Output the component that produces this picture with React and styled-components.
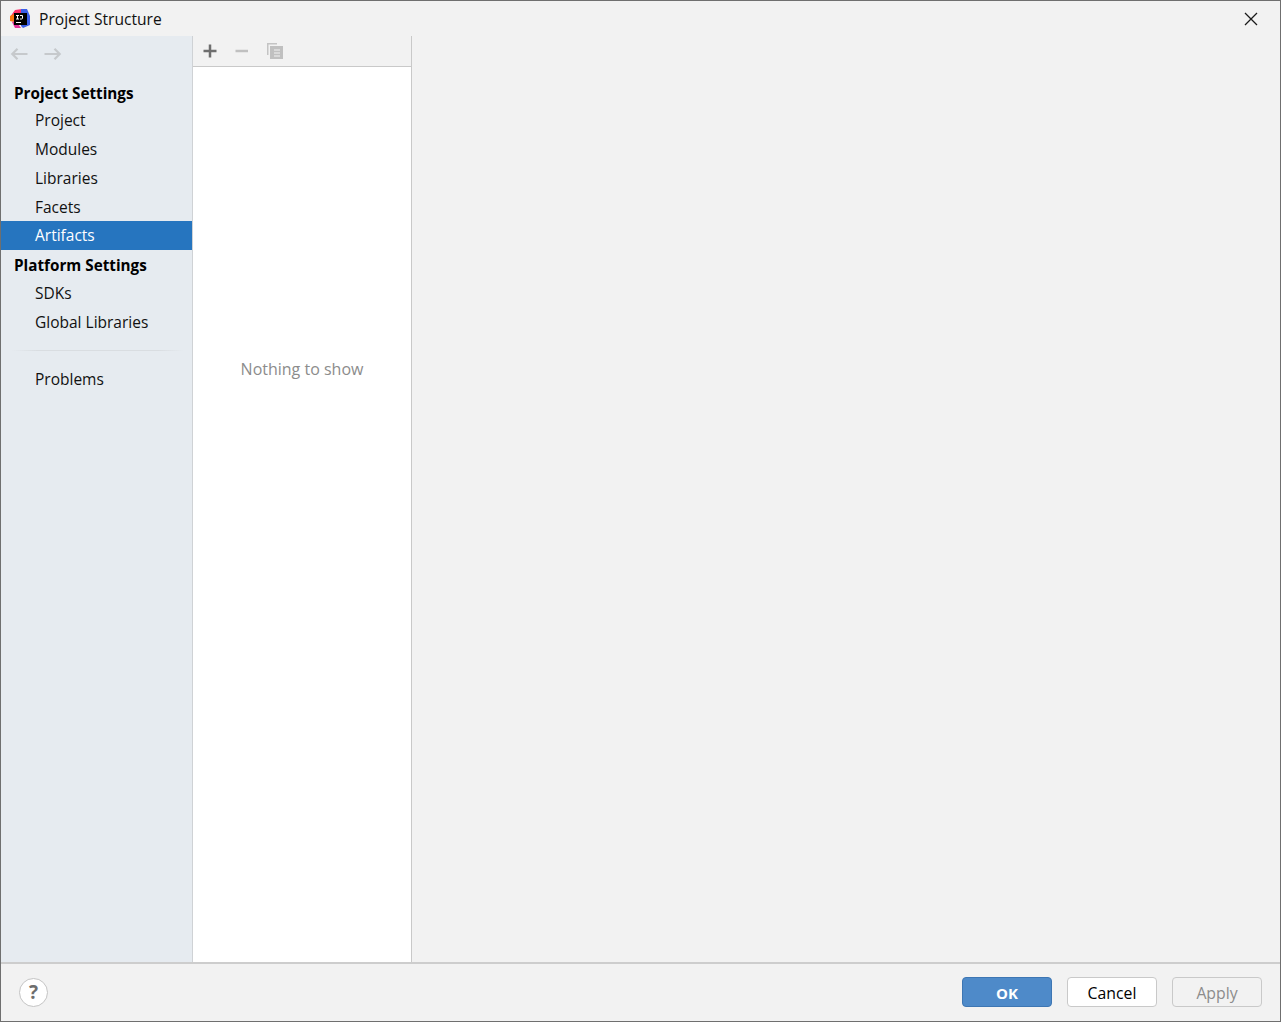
import React from 'react';
import styled, { createGlobalStyle } from 'styled-components';

const Global = createGlobalStyle`
  html, body { margin: 0; padding: 0; background: #f2f2f2; }
  #root { width: 1281px; height: 1022px; }
`;

const Window = styled.div`
  box-sizing: border-box;
  width: 1281px;
  height: 1022px;
  display: flex;
  flex-direction: column;
  background: #f2f2f2;
  border: 1px solid #6f6f6f;
  font-family: "Open Sans", "Noto Sans", sans-serif;
  font-size: 15px;
  color: #000;
  overflow: hidden;
`;

const TitleBar = styled.header`
  height: 35px;
  flex: none;
  display: flex;
  align-items: center;
  padding: 1px 20px 0 9px;
  box-sizing: border-box;
  gap: 9px;
`;

const Title = styled.span`
  flex: 1;
  font-size: 15.6px;
  color: #111;
`;

const CloseButton = styled.button`
  width: 20px;
  height: 20px;
  padding: 0;
  border: 0;
  background: none;
  display: flex;
  align-items: center;
  justify-content: center;
  position: relative;
  left: 1px;
`;

const Body = styled.div`
  flex: 1;
  min-height: 0;
  display: flex;
`;

const Sidebar = styled.nav`
  width: 192px;
  flex: none;
  box-sizing: border-box;
  background: #e6ebf0;
  border-right: 1px solid #cfd2d5;
  display: flex;
  flex-direction: column;
`;

const HistoryBar = styled.div`
  height: 35px;
  flex: none;
  box-sizing: border-box;
  display: flex;
  align-items: center;
  gap: 12px;
  padding: 1px 0 0 9px;
`;

const Heading = styled.div`
  box-sizing: border-box;
  height: ${p => p.$h}px;
  padding-top: ${p => p.$pt}px;
  line-height: ${p => p.$h - p.$pt}px;
  padding-left: 13px;
  font-weight: 700;
  font-size: 15.25px;
  color: #000;
  flex: none;
`;

const NavItem = styled.div`
  height: ${p => p.$h || 29}px;
  line-height: ${p => p.$h || 29}px;
  padding-left: 34px;
  flex: none;
  font-size: 15.5px;
  color: ${p => (p.$selected ? '#fff' : '#111')};
  background: ${p => (p.$selected ? '#2675bf' : 'transparent')};
`;

const NavSeparator = styled.div`
  height: 1px;
  flex: none;
  margin: 13px 8px 14px 11px;
  background: linear-gradient(90deg, #e6ebf0, #d9dde1 15%, #d9dde1 85%, #e6ebf0);
`;

const ListPanel = styled.section`
  width: 219px;
  flex: none;
  box-sizing: border-box;
  border-right: 1px solid #c9c9c9;
  display: flex;
  flex-direction: column;
`;

const ListToolbar = styled.div`
  height: 31px;
  flex: none;
  box-sizing: border-box;
  border-bottom: 1px solid #c9c9c9;
  display: flex;
  align-items: center;
  padding: 0 0 1px 9px;
  gap: 16px;
`;

const IconSlot = styled.span`
  height: 16px;
  display: block;
  flex: none;
  line-height: 0;
`;

const ListBody = styled.div`
  flex: 1;
  background: #fff;
  display: flex;
  justify-content: center;
  padding-top: 291px;
  color: #8c8c8c;
  font-size: 16px;
`;

const EmptyText = styled.span`
  height: 22px;
  line-height: 22px;
`;

const Detail = styled.main`
  flex: 1;
  background: #f2f2f2;
`;

const Footer = styled.footer`
  height: 59px;
  flex: none;
  box-sizing: border-box;
  border-top: 2px solid #cdcdcd;
  display: flex;
  align-items: center;
  padding: 0 18px 1px;
`;

const HelpButton = styled.button`
  width: 29px;
  height: 29px;
  box-sizing: border-box;
  border-radius: 50%;
  border: 1px solid #c4c4c4;
  background: #fff;
  color: #6e6e6e;
  font-family: "Open Sans", sans-serif;
  font-weight: 700;
  font-size: 19px;
  line-height: 1;
  padding: 0;
`;

const Spacer = styled.div`
  flex: 1;
`;

const Actions = styled.div`
  display: flex;
  gap: 15px;
`;

const ActionButton = styled.button`
  width: 90px;
  height: 30px;
  box-sizing: border-box;
  border-radius: 4px;
  padding: 2px 0 0;
  font-family: "Open Sans", sans-serif;
  font-size: ${p => (p.$primary ? 15 : 15.8)}px;
  border: 1px solid ${p => (p.$primary ? '#3d76b3' : '#c9c9c9')};
  background: ${p => (p.$primary ? '#4e8ac9' : p.$disabled ? '#f2f2f2' : '#fff')};
  color: ${p => (p.$primary ? '#fff' : p.$disabled ? '#8c8c8c' : '#000')};
  font-weight: ${p => (p.$primary ? 700 : 400)};
`;

const AppLogo = () => (
  <svg width="20" height="20" viewBox="0 0 20 20">
    <path d="M0 8 L5 1 L12 0 L12 8 L4 12 L1 12 Z" fill="#fc2f6a" />
    <path d="M0 7 L4 5 L4 13 L0 12 Z" fill="#f97a12" />
    <path d="M11 0 L17 0 L20 7 L20 16 L13 19 L11 17 Z" fill="#3b5fe8" />
    <path d="M2 13 L6 12 L11 19 L5 19 Z" fill="#e0339a" />
    <rect x="4" y="4" width="13" height="12" fill="#000" />
    <rect x="6" y="13" width="5" height="1" fill="#fff" />
    <path d="M6 6.500 H9 M7.500 6.500 V10 M6 10 H9 M10 6.500 H12.500 V9 Q12.500 10 11.500 10 H10" stroke="#fff" strokeWidth="1" fill="none" />
  </svg>
);

const CloseIcon = () => (
  <svg width="14" height="14" viewBox="0 0 14 14">
    <path d="M1 1 L13 13 M13 1 L1 13" stroke="#1a1a1a" strokeWidth="1.300" fill="none" />
  </svg>
);

const ArrowIcon = ({ flip }) => (
  <svg width="20" height="16" viewBox="0 0 20 16" style={flip ? { transform: 'scaleX(-1)' } : undefined}>
    <path d="M2 8 H17.500 M7.500 2.800 L2.300 8 L7.500 13.200" stroke="#c6c9cc" strokeWidth="2.200" fill="none" />
  </svg>
);

const PlusIcon = () => (
  <svg width="16" height="16" viewBox="0 0 16 16">
    <path d="M1.500 8 H14.500 M8 1.500 V14.500" stroke="#6e6e6e" strokeWidth="2.500" fill="none" />
  </svg>
);

const MinusIcon = () => (
  <svg width="16" height="16" viewBox="0 0 16 16">
    <path d="M1.500 8 H14" stroke="#c0c0c0" strokeWidth="2.500" fill="none" />
  </svg>
);

const CopyIcon = () => (
  <svg width="17" height="16" viewBox="-1 0 17 16">
    <path d="M0 0 H10 V1.500 H1.500 V12 H0 Z" fill="#c4c4c4" />
    <rect x="3" y="3" width="13" height="13" fill="#c0c0c0" />
    <path d="M7 7 H13 M7 10 H13 M7 13 H13" stroke="#f2f2f2" strokeWidth="1" />
  </svg>
);

export default function App() {
  return (
    <>
      <Global />
      <Window>
        <TitleBar>
          <AppLogo />
          <Title>Project Structure</Title>
          <CloseButton aria-label="Close"><CloseIcon /></CloseButton>
        </TitleBar>
        <Body>
          <Sidebar>
            <HistoryBar>
              <ArrowIcon />
              <ArrowIcon flip />
            </HistoryBar>
            <Heading $h={35} $pt={9}>Project Settings</Heading>
            <NavItem>Project</NavItem>
            <NavItem>Modules</NavItem>
            <NavItem>Libraries</NavItem>
            <NavItem $h={28}>Facets</NavItem>
            <NavItem $selected>Artifacts</NavItem>
            <Heading $h={29} $pt={1}>Platform Settings</Heading>
            <NavItem>SDKs</NavItem>
            <NavItem>Global Libraries</NavItem>
            <NavSeparator />
            <NavItem>Problems</NavItem>
          </Sidebar>
          <ListPanel>
            <ListToolbar>
              <IconSlot><PlusIcon /></IconSlot>
              <IconSlot><MinusIcon /></IconSlot>
              <IconSlot><CopyIcon /></IconSlot>
            </ListToolbar>
            <ListBody><EmptyText>Nothing to show</EmptyText></ListBody>
          </ListPanel>
          <Detail />
        </Body>
        <Footer>
          <HelpButton aria-label="Help">?</HelpButton>
          <Spacer />
          <Actions>
            <ActionButton $primary>OK</ActionButton>
            <ActionButton>Cancel</ActionButton>
            <ActionButton $disabled>Apply</ActionButton>
          </Actions>
        </Footer>
      </Window>
    </>
  );
}
